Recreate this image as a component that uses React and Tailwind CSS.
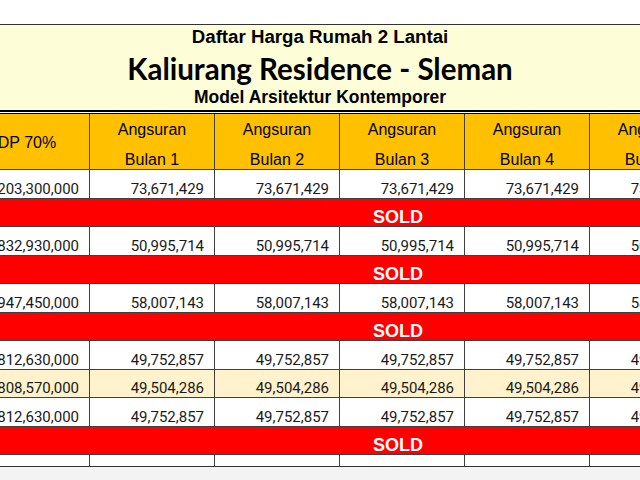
import React from 'react';

const rows = [
  { dp: '203,300,000', bln: '73,671,429' },
  { sold: true },
  { dp: '832,930,000', bln: '50,995,714' },
  { sold: true },
  { dp: '947,450,000', bln: '58,007,143' },
  { sold: true },
  { dp: '812,630,000', bln: '49,752,857' },
  { dp: '808,570,000', bln: '49,504,286', cream: true },
  { dp: '812,630,000', bln: '49,752,857' },
  { sold: true },
];

const months = [1, 2, 3, 4, 5];

function Cell({ children, className = '' }) {
  return (
    <div className={`w-[125px] shrink-0 border-r border-[#404040] ${className}`}>
      {children}
    </div>
  );
}

function App() {
  return (
    <div className="w-[640px] h-[480px] overflow-hidden bg-white flex flex-col">
      <div className="h-[24px] shrink-0" />

      {/* judul */}
      <div className="h-[88px] shrink-0 border-t border-b-2 border-t-[#333] border-b-black bg-[#fdfdd8] flex flex-col items-center">
        <div className="mt-[2px] h-[20px] leading-[20px] text-[18.7px] font-bold font-['Liberation_Sans',Arial,sans-serif] text-black">
          Daftar Harga Rumah 2 Lantai
        </div>
        <div className="mt-[4.5px] h-[34px] leading-[34px] text-[29.5px] font-bold font-['Lato',sans-serif] text-black">
          Kaliurang Residence - Sleman
        </div>
        <div className="mt-[2.5px] h-[18px] leading-[18px] text-[17.5px] font-bold font-['Liberation_Sans',Arial,sans-serif] text-black">
          Model Arsitektur Kontemporer
        </div>
      </div>
      <div className="h-[1px] shrink-0 bg-white" />

      {/* tabel */}
      <div className="ml-[-35px] flex flex-col border-t border-black">
        <div className="h-[56px] flex bg-[#ffc000] border-b border-[#404040] font-['Liberation_Sans',Arial,sans-serif] text-[16px] text-black">
          <Cell className="border-[#333] flex items-center justify-center pt-[3px]">DP 70%</Cell>
          {months.map((m) => (
            <Cell key={m} className="border-[#333] flex flex-col items-center pt-[7.5px]">
              <div className="h-[16px] leading-[16px]">Angsuran</div>
              <div className="mt-[14px] h-[16px] leading-[16px]">Bulan {m}</div>
            </Cell>
          ))}
        </div>

        {rows.map((r, i) =>
          r.sold ? (
            <div
              key={i}
              className="h-[28.55px] shrink-0 bg-[#ff0000] border-b border-[#404040] flex items-end pl-[408px] text-white text-[18px] font-bold leading-[18px] font-['Liberation_Sans',Arial,sans-serif]"
            >
              SOLD
            </div>
          ) : (
            <div
              key={i}
              className={`h-[28.55px] shrink-0 flex border-b border-[#404040] font-['Roboto',sans-serif] text-[15px] leading-[18px] text-[#1a1a1a] ${
                r.cream ? 'bg-[#fff2cc]' : 'bg-white'
              }`}
            >
              <Cell className="flex items-end justify-end pr-[10px]">{r.dp}</Cell>
              {months.map((m) => (
                <Cell key={m} className="flex items-end justify-end pr-[10px]">
                  {r.bln}
                </Cell>
              ))}
            </div>
          )
        )}

        <div className="h-[11.5px] shrink-0 flex bg-white border-b border-[#333]">
          <Cell />
          {months.map((m) => (
            <Cell key={m} />
          ))}
        </div>
      </div>
      <div className="flex-1 bg-[#f3f3f3]" />
    </div>
  );
}

export default App;
